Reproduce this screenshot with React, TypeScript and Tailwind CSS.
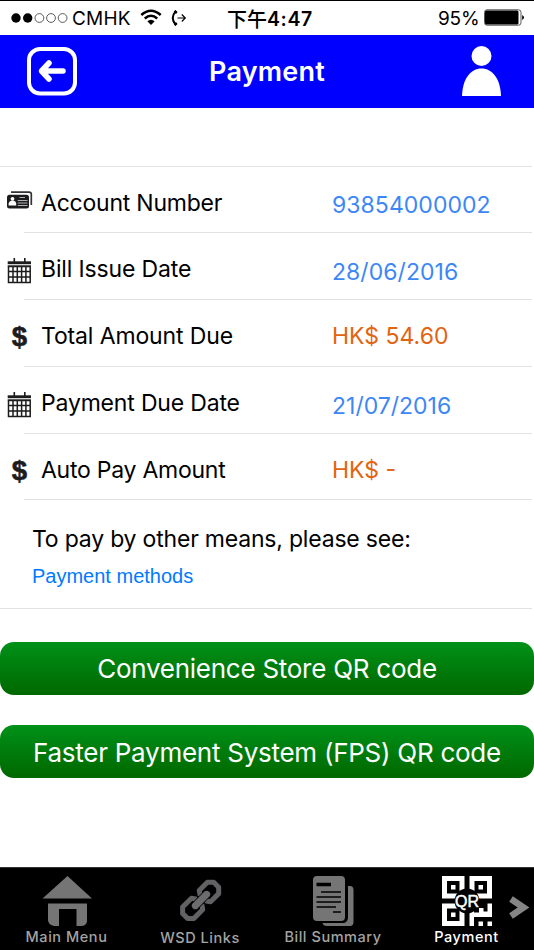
import React from "react";

interface BillRow {
  label: string;
  value: string;
  icon: React.ReactNode;
  labelClass: string;
  valueClass: string;
  rowClass: string;
}

const CardIcon = () => (
  <svg width="26" height="19" viewBox="0 0 26 19" fill="none" className="-mt-[8px]">
    <path d="M4 1.200H22Q24.300 1.200 24.300 3.300V14" stroke="#333" strokeWidth="1.700" />
    <rect y="3.800" width="22" height="13.700" rx="2.500" fill="#1c1c1e" />
    <circle cx="5.500" cy="7.800" r="1.900" fill="#fff" />
    <path d="M1.600 14.500V12.500Q2 10.500 4 9.800H7Q9 10.500 9.200 12.500V14.500Z" fill="#fff" />
    <path d="M12.500 6.500H18M10.800 9.500H20.500M10.800 12H20.500M10.800 14.500H20.500" stroke="#b0b0b0" strokeWidth="1" />
  </svg>
);

const CalendarIcon = () => (
  <svg width="24" height="26" viewBox="0 0 24 26" fill="none">
    <path d="M.7 3.300H24V6.200H.7Z" fill="#1c1c1e" />
    <path d="M7.300 0V4M17.800 0V4" stroke="#1c1c1e" strokeWidth="1.600" />
    <path
      d="M1.500 8.500H23.200V24.500H1.500ZM6 8.500V24.500M10.300 8.500V24.500M14.600 8.500V24.500M18.900 8.500V24.500M1.500 13.600H23.200M1.500 19H23.200"
      stroke="#1c1c1e"
      strokeWidth="1.500"
    />
    <path d="M.7 7.900H24" stroke="#1c1c1e" strokeWidth="1" />
  </svg>
);

const DollarIcon = () => (
  <span className="-mt-px block w-[25px] text-center font-['Liberation_Sans',sans-serif] text-[27.500px] leading-[26px] font-bold text-[#1c1c1e] [-webkit-text-stroke:0.6px_#1c1c1e]">
    $
  </span>
);

const rows: BillRow[] = [
  {
    label: "Account Number",
    value: "93854000002",
    icon: <CardIcon />,
    labelClass: "pt-px tracking-[-0.23px]",
    valueClass: "pt-[6px] text-[#3d87f5] tracking-[0.05px]",
    rowClass: "h-[66px]",
  },
  {
    label: "Bill Issue Date",
    value: "28/06/2016",
    icon: <CalendarIcon />,
    labelClass: "tracking-[-0.14px]",
    valueClass: "pt-[6px] text-[#3d87f5] tracking-[0.05px]",
    rowClass: "h-[67px]",
  },
  {
    label: "Total Amount Due",
    value: "HK$ 54.60",
    icon: <DollarIcon />,
    labelClass: "tracking-[-0.13px]",
    valueClass: "text-[#e2640f]",
    rowClass: "h-[67px]",
  },
  {
    label: "Payment Due Date",
    value: "21/07/2016",
    icon: <CalendarIcon />,
    labelClass: "tracking-[-0.18px]",
    valueClass: "pt-[6px] text-[#3d87f5]",
    rowClass: "h-[67px]",
  },
  {
    label: "Auto Pay Amount",
    value: "HK$ -",
    icon: <DollarIcon />,
    labelClass: "pt-px tracking-[-0.25px]",
    valueClass: "pt-px text-[#e2640f]",
    rowClass: "h-[66px]",
  },
];

const StatusBar = () => (
  <div className="flex h-[35px] items-center border-t border-black pt-px text-[19px] text-black">
    <svg width="58" height="12" viewBox="0 0 58 12" className="-mt-[2px] ml-[11px]">
      <circle cx="5" cy="6" r="4.700" />
      <circle cx="16.700" cy="6" r="4.700" />
      <g fill="none" stroke="#333" strokeWidth=".8">
        <circle cx="28.400" cy="6" r="4.400" />
        <circle cx="40" cy="6" r="4.400" />
        <circle cx="51.600" cy="6" r="4.400" />
      </g>
    </svg>
    <span className="ml-[3px] w-[61px] pt-[2px] tracking-[0.2px]">CMHK</span>
    <svg width="22" height="17" viewBox="0 0 22 17" className="-mt-[2px] ml-[7px]" fill="none" stroke="#000" strokeWidth="2.600">
      <path d="M1.300 6Q11 -2.500 20.700 6" />
      <path d="M4.800 9.500Q11 4 17.200 9.500" />
      <path d="M7.300 12.300Q11 9.300 14.700 12.300L11 16Z" fill="#000" stroke="none" />
    </svg>
    <svg width="16" height="18" viewBox="0 0 16 18" className="-mt-[2px] ml-[9px]" fill="none" stroke="#000">
      <path d="M5 1.800Q-1.500 9 5 16.200" strokeWidth="2" />
      <path d="M3.500 2L5.800 4M3.500 16L5.800 14" strokeWidth="2.400" />
      <path d="M6.500 9H14M10.800 5.500L14.300 9L10.800 12.500" strokeWidth="1.200" />
    </svg>
    <span className="ml-[40px] flex w-[90px] items-center font-medium whitespace-nowrap">
      <span className="font-['Noto_Sans_CJK_TC',sans-serif] text-[20px] leading-none">下午</span>
      <span className="pt-[2px] text-[19.500px] font-semibold tracking-[0.6px]">4:47</span>
    </span>
    <span className="ml-[121px] w-[42px] pt-[2px] text-[19px] tracking-[-0.200px]">95%</span>
    <svg width="42" height="17" viewBox="0 0 42 17" className="-mt-[2px] ml-[4px]">
      <rect x=".5" y=".8" width="36.500" height="15.400" rx="2.500" fill="none" stroke="#555" />
      <rect x="1" y="1.500" width="33.500" height="14" rx="1.500" />
      <path d="M38.200 6Q42 8.500 38.200 11Z" />
    </svg>
  </div>
);

const Header = () => (
  <header className="flex h-[73px] items-center justify-between bg-[#0000ff] pr-[33px] pl-[27px] text-white">
    <svg width="50" height="50" viewBox="0 0 50 50" fill="none" stroke="#fff" strokeLinecap="round" strokeLinejoin="round">
      <rect x="2" y="2" width="46" height="44.500" rx="11" strokeWidth="4" />
      <path d="M36 24H15M22 16L14.500 24L22 32" strokeWidth="5.500" />
    </svg>
    <h1 className="-ml-[5px] pt-[2px] text-[27px] font-semibold tracking-[0.2px]">Payment</h1>
    <svg width="39" height="50" viewBox="0 0 39 50" fill="#fff" className="-mt-[2px]">
      <circle cx="19.500" cy="10" r="10" />
      <path d="M0 50C.5 33 8.500 22.500 19.500 22.500S38.500 33 39 50Z" />
    </svg>
  </header>
);

const HomeIcon = () => (
  <svg width="50" height="51" viewBox="0 0 50 51" fill="#757575">
    <path d="M25.500 0L50 22.500H.5Z" />
    <path d="M6 27.500H45V45.500Q44 50 39 50H34.500V33H17V50H12Q7 49 6 44.500Z" />
  </svg>
);

const LinksIcon = () => (
  <svg width="44" height="44" viewBox="0 0 44 44" fill="none" strokeLinejoin="round">
    <g transform="rotate(-45 22 21)" stroke="#626265" strokeWidth="5">
      <path d="M19.500 17.500L16.500 13H4L-.5 17.500V24.500L4 29H16.500L19.500 24.500" />
      <path d="M24.500 17.500L27.500 13H39L43.500 17.500V24.500L39 29H27.500L24.500 24.500" />
      <path d="M14 21H30" stroke="#000" strokeWidth="8.500" strokeLinecap="round" />
      <path d="M14 21H30" stroke="#6c6c6f" strokeWidth="7" strokeLinecap="round" />
    </g>
  </svg>
);

const BillIcon = () => (
  <svg width="42" height="51" viewBox="0 0 42 51">
    <path d="M35 10H37Q40.500 10 40.500 14V46Q40.500 50 37 50H14Q10 50 9.500 47H31Q35 46 35 41Z" fill="#757575" />
    <path d="M4 0H28Q32 0 32 4V41Q32 45 28 45H4Q0 45 0 41V4Q0 0 4 0Z" fill="#757575" />
    <path d="M3.500 8.500H18" stroke="#000" strokeWidth="3.500" />
    <path d="M8 16H28M3.500 21H28M3.500 26H28M3.500 31H23M20 36H28" stroke="#000" strokeWidth="1.700" />
  </svg>
);

const QrIcon = () => (
  <svg width="50" height="50" viewBox="0 0 50 50" fill="#fff">
    <path
      fillRule="evenodd"
      d="M0 0H22.500V22.500H0ZM5 5V17.500H17.500V5ZM27.500 0H50V22.500H27.500ZM32.500 5V17.500H45V5ZM0 27.500H22.500V50H0ZM5 32.500V45H17.500V32.500Z"
    />
    <path d="M9 9H13.500V13.500H9ZM36.500 9H41V13.500H36.500ZM9 36.500H13.500V41H9Z" />
    <path d="M27.500 32H32V36.500H37V32H41.500V35.500H45.500V27.500H50V41H32V50H27.500ZM36.500 45.500H41V50H36.500ZM45.500 45.500H50V50H45.500Z" />
    <circle cx="25" cy="25" r="12.500" fill="#000" />
    <text x="25" y="30.500" textAnchor="middle" fontFamily="Liberation Sans" fontSize="16" textLength="24" stroke="#fff" strokeWidth=".5">
      QR
    </text>
  </svg>
);

const tabs = [
  { name: "Main Menu", icon: <HomeIcon />, className: "w-[134px] pt-[8px] text-[#a3a3a3]", labelClass: "mt-0" },
  { name: "WSD Links", icon: <LinksIcon />, className: "w-[133px] pt-[11px] text-[#a3a3a3]", labelClass: "mt-[5px]" },
  { name: "Bill Summary", icon: <BillIcon />, className: "w-[133px] pt-[8px] text-[#a3a3a3]", labelClass: "mt-0" },
  { name: "Payment", icon: <QrIcon />, className: "w-[134px] pt-[8px] text-white", labelClass: "mt-px" },
];

const TabBar = () => (
  <nav className="relative flex h-[83px] border-t border-[#333] bg-black">
    {tabs.map((tab) => (
      <button key={tab.name} className={`flex flex-col items-center ${tab.className}`}>
        {tab.icon}
        <span className={`-ml-px text-[14.500px] leading-5 font-medium tracking-[0.55px] whitespace-nowrap ${tab.labelClass}`}>
          {tab.name}
        </span>
      </button>
    ))}
    <svg className="absolute top-[28px] left-[509px]" width="20" height="23" viewBox="0 0 20 23" fill="none">
      <path d="M2 3L14.500 11.500L2 20" stroke="#858585" strokeWidth="6.500" />
    </svg>
  </nav>
);

const App: React.FC = () => {
  return (
    <div className="flex h-[950px] w-[534px] flex-col overflow-hidden bg-white font-[Inter,sans-serif] text-black">
      <StatusBar />
      <Header />
      <main className="flex grow flex-col">
        <div className="mr-[2px] h-[59px] border-b border-[#e2e2e2]" />
        {rows.map((row) => (
          <div key={row.label} className={`flex pl-[7px] ${row.rowClass}`}>
            <div className="flex w-[17px] shrink-0 items-center pt-[8px]">
              <div className="shrink-0">{row.icon}</div>
            </div>
            <div className="mr-[2px] flex grow items-center border-b border-[#e2e2e2] pt-[5px] pl-[17px] text-[23px] leading-7 whitespace-nowrap">
              <span className={`w-[291px] ${row.labelClass}`}>{row.label}</span>
              <span className={row.valueClass}>{row.value}</span>
            </div>
          </div>
        ))}
        <div className="mr-[2px] flex h-[109px] flex-col border-b border-[#e2e2e2] pt-[23px] pl-8 whitespace-nowrap">
          <p className="text-[23px] leading-8 tracking-[-0.2px]">To pay by other means, please see:</p>
          <a className="mt-[9px] font-['Liberation_Sans',sans-serif] text-[20px] leading-6 text-[#007aff]">Payment methods</a>
        </div>
        <div className="mt-[33px] flex flex-col gap-[30px] text-[26px] tracking-[-0.26px] whitespace-nowrap text-white">
          <button className="h-[53px] rounded-[14px] bg-linear-to-b from-[#009118] to-[#006800]">
            Convenience Store QR code
          </button>
          <button className="h-[53px] rounded-[14px] bg-linear-to-b from-[#009118] to-[#006800] pt-px">
            Faster Payment System (FPS) QR code
          </button>
        </div>
      </main>
      <TabBar />
    </div>
  );
};

export default App;
